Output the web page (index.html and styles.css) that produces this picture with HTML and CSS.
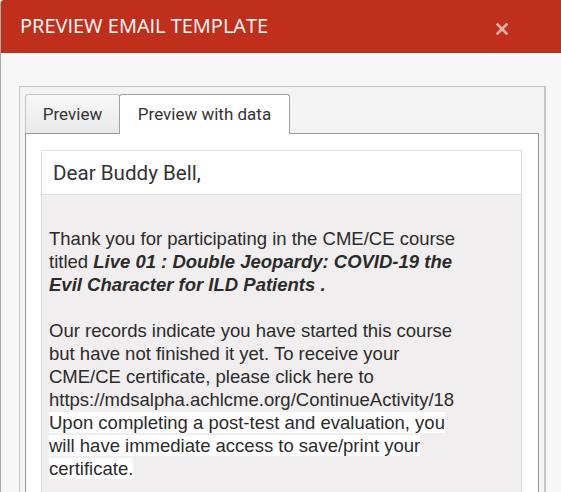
FILE: index.html
```html
<!DOCTYPE html>
<html>
<head>
    <title>Preview Email Template</title>
    <meta charset="utf-8">
    <link rel="stylesheet" href="styles.css">
</head>
<body>
    <div class="modal">
        <div class="modal-header">
            <h2>PREVIEW EMAIL TEMPLATE</h2>
            <span class="close" title="Close">
                <svg width="12" height="12" viewBox="0 0 12 12"><path d="M1.5 1.5 L10.5 10.5 M10.5 1.5 L1.5 10.5" stroke="currentColor" stroke-width="2.6" stroke-linecap="square"/></svg>
            </span>
        </div>
        <div class="modal-body">
            <div class="panel">
                <ul class="tabs">
                    <li class="tab">Preview</li>
                    <li class="tab active">Preview with data</li>
                </ul>
                <div class="tab-content">
                    <div class="email">
                        <div class="greeting">Dear Buddy Bell,</div>
                        <div class="message">
                            <p>Thank you for participating in the CME/CE course titled <b><i>Live 01 : Double Jeopardy: COVID-19 the Evil Character for ILD Patients .</i></b></p>
                            <p>Our records indicate you have started this course but have not finished it yet. To receive your CME/CE certificate, please click here to https://mdsalpha.achlcme.org/ContinueActivity/18 <span class="hl">Upon completing a post-test and evaluation, you will have immediate access to save/print your certificate.</span></p>
                            <p>&nbsp;</p>
                        </div>
                    </div>
                </div>
            </div>
        </div>
    </div>
</body>
</html>
```

FILE: styles.css
```css
body { margin: 0; background: #f7f7f7; font-family: Roboto, "Liberation Sans", sans-serif; overflow: hidden; }
.modal { border-left: 1px solid #a9a9a9; border-top-left-radius: 4px; min-height: 492px; background: #f7f7f7; }
.modal-header { height: 53px; background: #bf2f1c; color: #fff; display: flex; align-items: center; justify-content: space-between; padding: 0 53px 0 19px; border-top-left-radius: 3px; }
.modal-header h2 { margin: 0; font-family: "Open Sans", sans-serif; font-weight: normal; font-size: 20px; position: relative; top: -1px; }
.close { color: rgba(255, 255, 255, 0.62); display: flex; margin-top: 4px; }
.modal-body { padding: 33px 15px 0 18px; }
.panel { border: 1px solid #c4c4c4; border-right-width: 2px; background: #f3f3f3; padding: 7px 5px 0 5px; }
.tabs { list-style: none; margin: 0; padding: 0; display: flex; position: relative; z-index: 1; }
.tab { box-sizing: border-box; height: 39px; border: 1px solid #c4c4c4; border-bottom: 0; border-radius: 3px 3px 0 0; background: linear-gradient(#f8f8f8, #e9e9e9); color: #333; font-size: 17px; line-height: 38px; padding: 0 14px; width: 95px; text-align: center; }
.tab.active { background: #fff; border-color: #a0a0a0; height: 40px; margin-bottom: -1px; width: 171px; margin-left: -1px; }
.tab-content { border: 1px solid #999; background: #fff; padding: 16px 16px 0 15px; }
.email { border: 1px solid #ddd; border-bottom: 0; }
.greeting { height: 43px; line-height: 44px; padding-left: 11px; font-size: 20.6px; color: #333; background: #fff; border-bottom: 1px solid #ddd; }
.message { background: #f0eeee; padding: 9px 7px; font-family: "Liberation Sans", Arial, sans-serif; font-size: 18.5px; line-height: 23px; color: #2b2b2b; }
.message p { margin: 23px 0; max-width: 416px; }
.hl { background: #fff; }
```
